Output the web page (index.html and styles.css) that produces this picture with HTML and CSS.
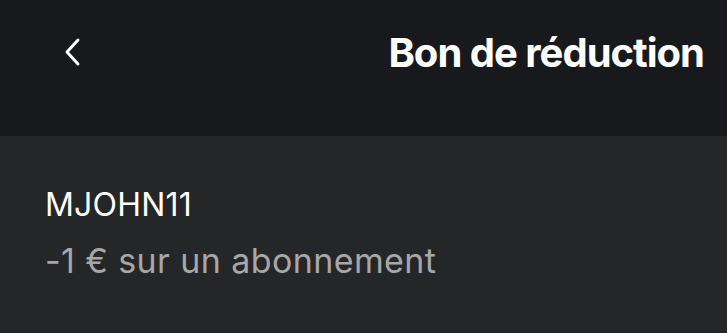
FILE: index.html
```html
<!DOCTYPE html>
<html lang="fr">
<head>
    <meta charset="UTF-8">
    <meta name="viewport" content="width=device-width, initial-scale=1.0">
    <title>Bon de réduction</title>
    <link rel="stylesheet" href="styles.css">
</head>
<body>
    <header class="top-bar">
        <button class="back-button" aria-label="Retour">
            <svg width="18" height="30" viewBox="0 0 18 30" fill="none">
                <path d="M15 3 L4 15 L15 27" stroke="#ffffff" stroke-width="3" stroke-linecap="round" stroke-linejoin="round"/>
            </svg>
        </button>
        <h1>Bon de réduction</h1>
    </header>
    <main class="voucher">
        <div class="voucher-code">MJOHN11</div>
        <div class="voucher-desc">-1 € sur un abonnement</div>
    </main>
</body>
</html>
```

FILE: styles.css
```css
* {
    box-sizing: border-box;
    margin: 0;
    padding: 0;
}
body {
    background: #252628;
    color: #ffffff;
    font-family: 'Inter', 'Roboto', Arial, sans-serif;
    height: 100vh;
    overflow: hidden;
}
.top-bar {
    align-items: center;
    background: #18191d;
    display: flex;
    height: 136px;
    justify-content: space-between;
    padding: 0 23px 32px 63px;
}
.back-button {
    background: none;
    border: none;
    cursor: pointer;
    display: flex;
}
h1 {
    font-size: 40px;
    font-weight: 700;
    letter-spacing: -1px;
}
.voucher {
    padding: 41px 45px;
}
.voucher-code {
    font-size: 32px;
    letter-spacing: 0.2px;
    line-height: 56px;
}
.voucher-desc {
    color: #a7a7a7;
    font-size: 34px;
    letter-spacing: 0.4px;
    line-height: 56px;
}
```
